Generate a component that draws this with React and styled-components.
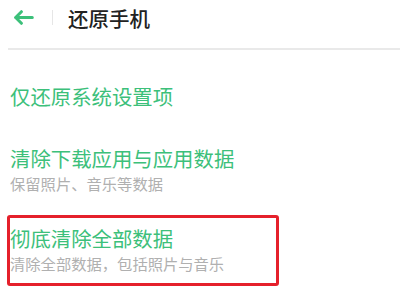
import React from 'react';
import styled, { createGlobalStyle } from 'styled-components';

const GlobalStyle = createGlobalStyle`
  html, body {
    margin: 0;
    padding: 0;
    background: #ffffff;
  }
  body {
    font-family: "Noto Sans CJK SC", "Noto Sans", sans-serif;
  }
`;

const Page = styled.div`
  width: 400px;
  height: 300px;
  overflow: hidden;
  background: #ffffff;
`;

const Header = styled.div`
  height: 34px;
  display: flex;
  align-items: center;
  padding-left: 13px;
`;

const BackIcon = styled.svg`
  width: 21px;
  height: 15px;
  flex: none;
`;

const Separator = styled.span`
  width: 1px;
  height: 15px;
  background: #e6e6e6;
  margin-left: 18px;
  margin-right: 15px;
`;

const Title = styled.h1`
  margin: 0;
  font-size: 20.5px;
  line-height: 24px;
  font-weight: 500;
  color: #222222;
  margin-top: 2px;
`;

const Rule = styled.div`
  height: 2px;
  margin: 14px 0 0 8px;
  background: #e9e9e9;
`;

const List = styled.div`
  display: flex;
  flex-direction: column;
  padding-left: 10px;
`;

const Option = styled.div`
  margin-top: ${(p) => p.$top}px;
  display: flex;
  flex-direction: column;
`;

const OptionTitle = styled.div`
  font-size: 20.4px;
  line-height: 24px;
  color: #3cc07a;
`;

const OptionNote = styled.div`
  margin-top: 3px;
  font-size: 15.3px;
  line-height: 20px;
  color: #b0b0b0;
`;

const Highlight = styled.div`
  margin: 22px 0 0 -3px;
  width: 266px;
  padding: 8px 0 10px 0;
  border: 3px solid #e5202b;
  border-radius: 3px;
  display: flex;
  flex-direction: column;
`;

const options = [
  { title: '仅还原系统设置项', top: 34 },
  { title: '清除下载应用与应用数据', note: '保留照片、音乐等数据', top: 38 },
];

export default function App() {
  return (
    <Page>
      <GlobalStyle />
      <Header>
        <BackIcon viewBox="0 0 21 15" fill="none">
          <path
            d="M19.3 7.5H2.6M8.4 1.7L2.6 7.5L8.4 13.3"
            stroke="#3cc07a"
            strokeWidth="3"
            strokeLinecap="round"
            strokeLinejoin="round"
          />
        </BackIcon>
        <Separator />
        <Title>还原手机</Title>
      </Header>
      <Rule />
      <List>
        {options.map((o) => (
          <Option key={o.title} $top={o.top}>
            <OptionTitle>{o.title}</OptionTitle>
            {o.note && <OptionNote>{o.note}</OptionNote>}
          </Option>
        ))}
        <Highlight>
          <OptionTitle>彻底清除全部数据</OptionTitle>
          <OptionNote>清除全部数据，包括照片与音乐</OptionNote>
        </Highlight>
      </List>
    </Page>
  );
}
